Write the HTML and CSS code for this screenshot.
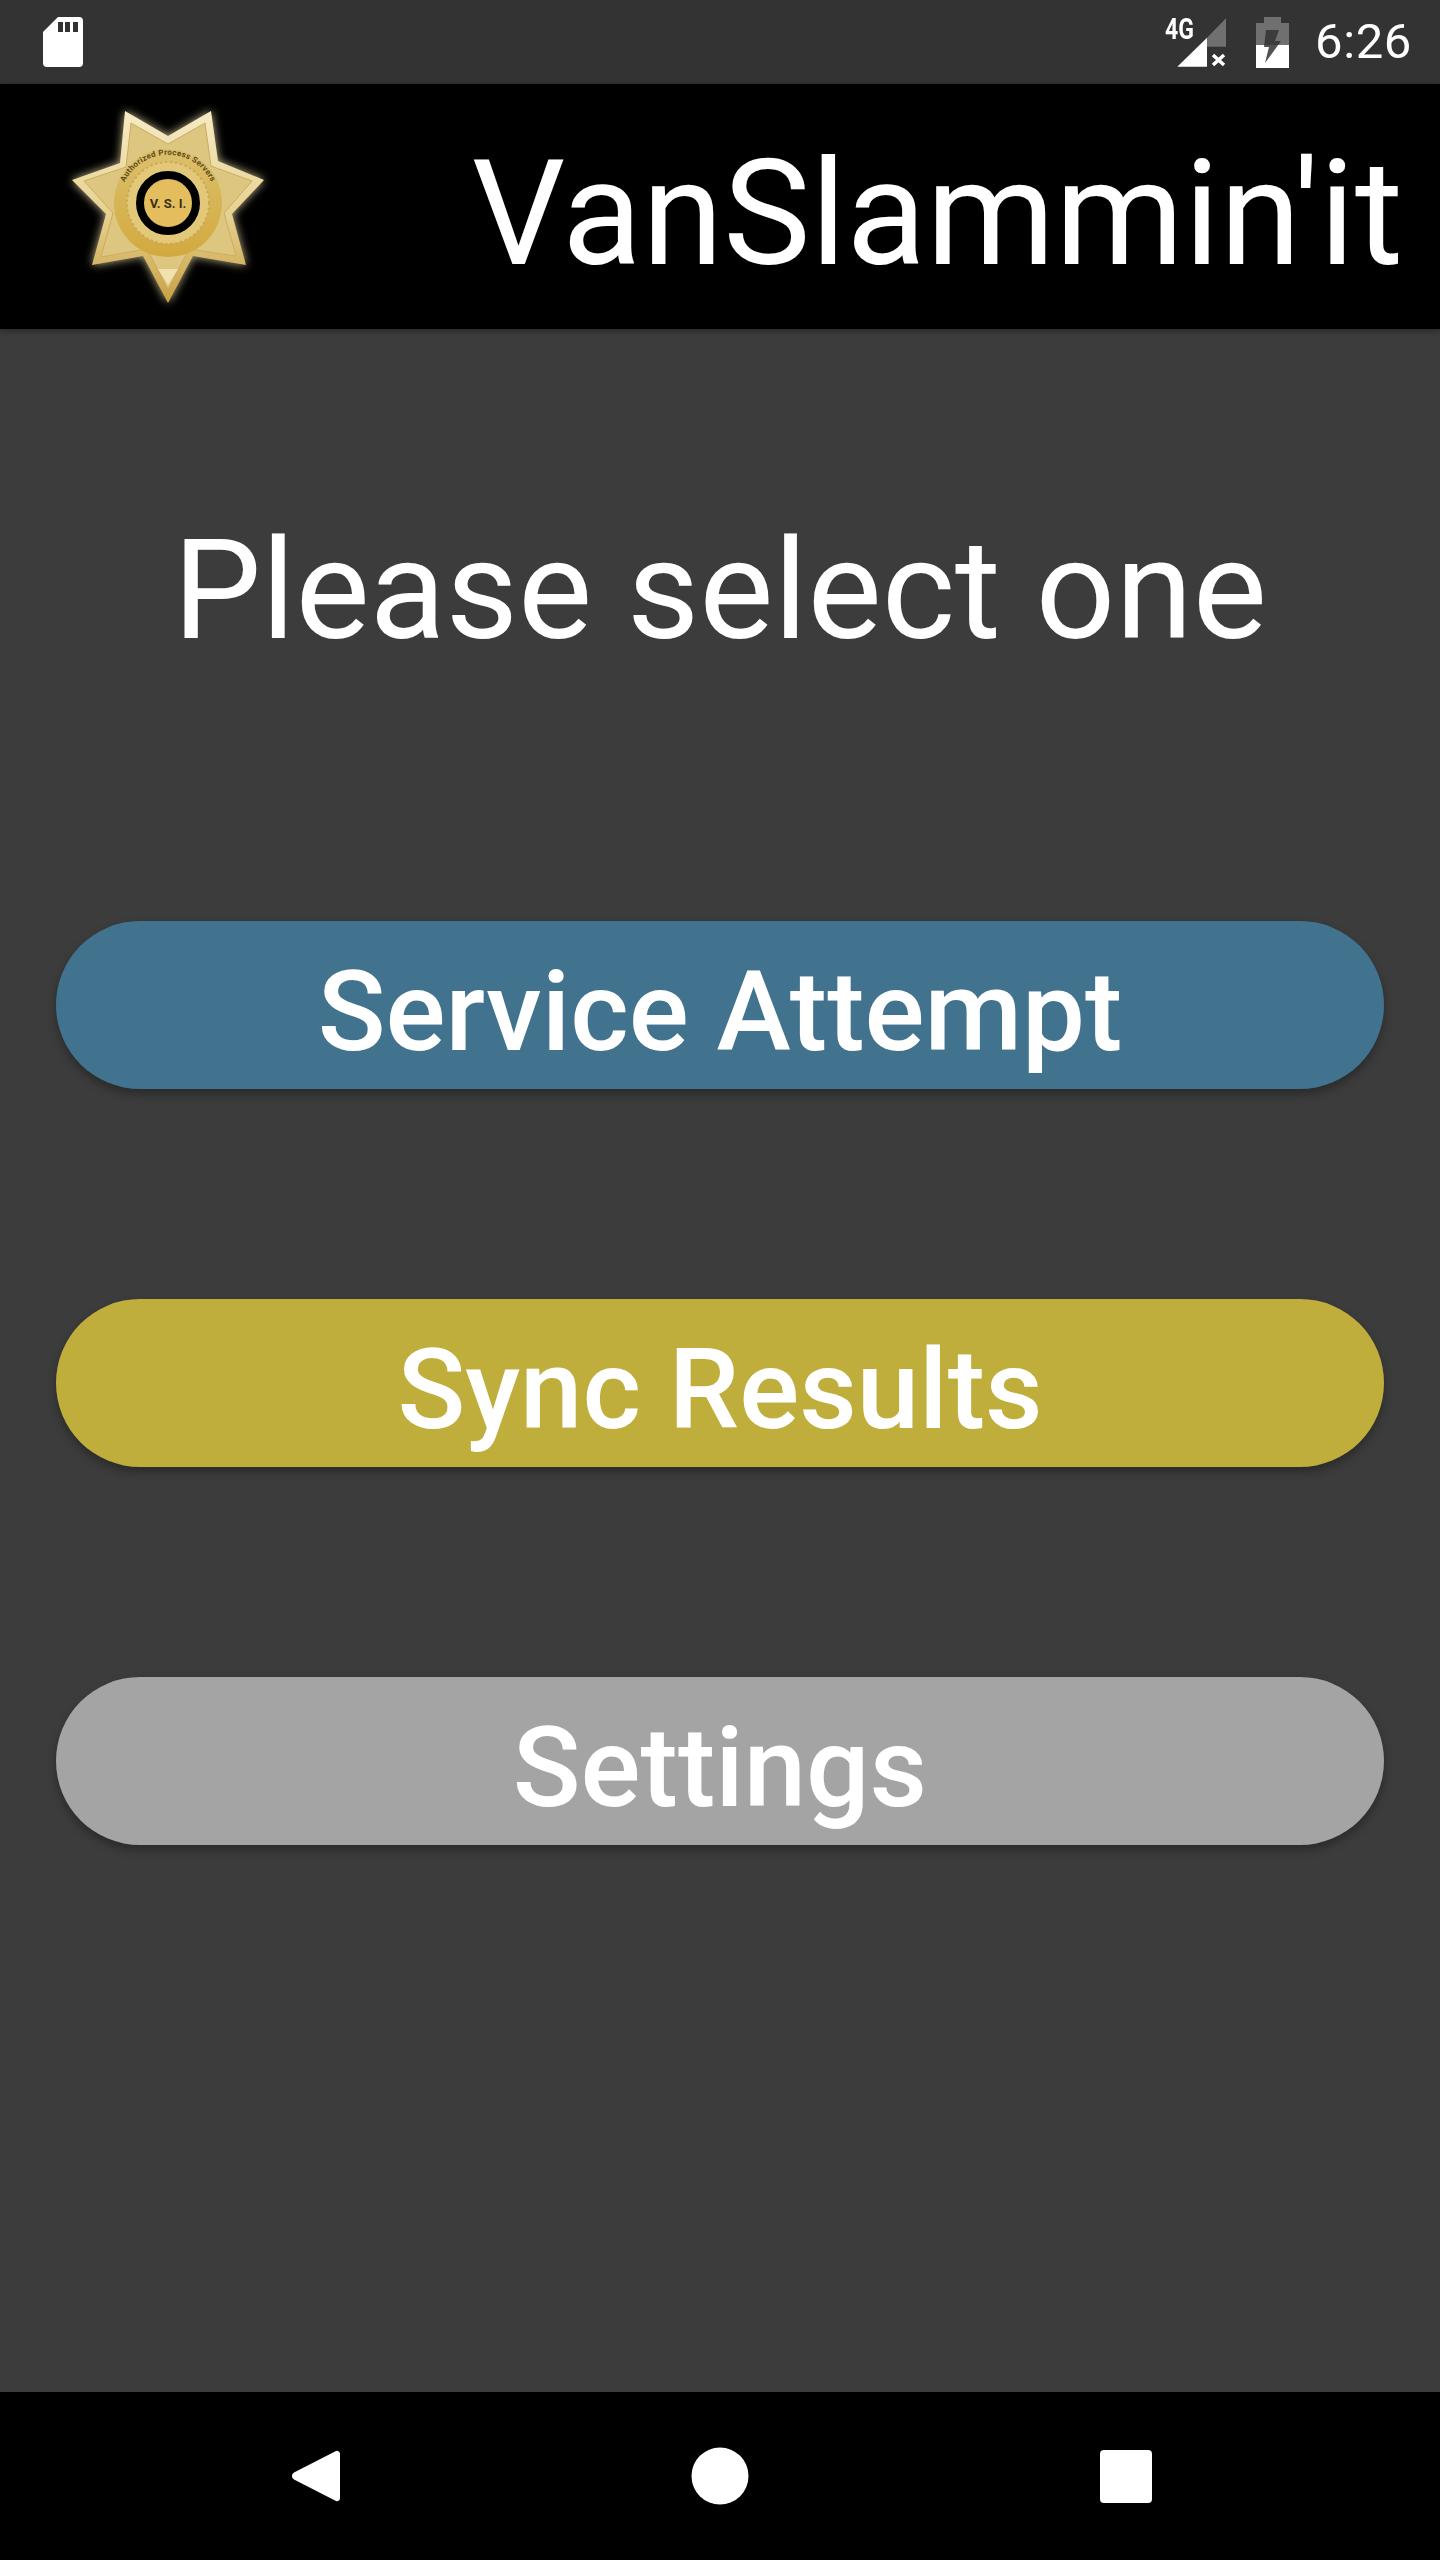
FILE: index.html
```html
<!DOCTYPE html>
<html lang="en">
<head>
<meta charset="utf-8">
<title>VanSlammin'it</title>
<link rel="stylesheet" href="styles.css">
</head>
<body>
<div class="status-bar">
  <svg class="sd-icon" width="40" height="50" viewBox="0 0 40 50"><path d="M15 0H36a4 4 0 0 1 4 4V46a4 4 0 0 1-4 4H4a4 4 0 0 1-4-4V15Z" fill="#fff"/><path d="M15 5h5v10h-5zM22 5h5v10h-5zM30 5h5v10h-5z" fill="#333"/></svg>
  <div class="status-right">
    <div class="signal">
      <svg class="signal-icon" width="62" height="50" viewBox="0 0 62 50"><path d="M31 20.700 50 1.300V29.700H31Z" fill="#fff" fill-opacity=".3"/><path d="M1.300 49.700 31 20.700V49.700Z" fill="#fff"/><path d="M37 38 48 48M48 38 37 48" stroke="#fff" stroke-width="3.600" fill="none"/></svg>
      <span class="net-label">4G</span>
    </div>
    <svg class="battery-icon" width="33" height="51" viewBox="0 0 33 51"><path d="M8 0H25V6H33V51H0V6H8Z" fill="#fff" fill-opacity=".3"/><path d="M0 28H33V51H0Z" fill="#fff"/><path d="M10 13H23L19 24H25L9 46 13 30H8Z" fill="#333" fill-opacity=".85"/></svg>
    <span class="clock">6:26</span>
  </div>
</div>
<header class="toolbar">
  <svg class="badge" width="220" height="220" viewBox="58 90 220 220">
    <defs>
      <filter id="glow" x="-20%" y="-20%" width="140%" height="140%"><feGaussianBlur stdDeviation="5"/></filter>
      <linearGradient id="gold" x1="0" y1="0" x2="0" y2="1"><stop offset="0" stop-color="#f6ebc4"/><stop offset=".55" stop-color="#e6d08e"/><stop offset="1" stop-color="#c9a043"/></linearGradient>
      <linearGradient id="ring" x1="0" y1="0" x2="0" y2="1"><stop offset="0" stop-color="#dcc06c"/><stop offset="1" stop-color="#d2a93e"/></linearGradient>
      <path id="arc" d="M120.700 193.700A48 48 0 0 1 215.300 193.700"/>
    </defs>
    <path d="M125 110 168 135 211 110 218 160 264 179 232 213 246 264 193 255 168 302 143 255 92 264 106 213 72 179 120 162Z" fill="#f3e3b0" filter="url(#glow)" opacity=".8"/>
    <path d="M125 110 168 135 211 110 218 160 264 179 232 213 246 264 193 255 168 302 143 255 92 264 106 213 72 179 120 162Z" fill="url(#gold)"/>
    <path d="M131 122 168 143 205 122 211 165 252 180 224 212 236 255 189 248 168 288 147 248 101 256 113 212 84 180 126 166Z" fill="#dcc680" stroke="#c9ae62" stroke-width="1"/>
    <path d="M158 268H178L168 284Z" fill="#efe2ae"/>
    <circle cx="168" cy="202" r="54" fill="url(#ring)"/>
    <circle cx="168" cy="202" r="41" fill="#e2c878" stroke="#c8a850" stroke-width="2" stroke-dasharray="2 3"/>
    <circle cx="168" cy="202" r="28" fill="#e3bd5e" stroke="#000" stroke-width="8"/>
    <text class="badge-motto"><textPath href="#arc" startOffset="50%" text-anchor="middle">Authorized Process Servers</textPath></text>
    <text class="badge-initials" x="168" y="206.500" text-anchor="middle">V. S. I.</text>
  </svg>
  <h1 class="app-title">VanSlammin'it</h1>
</header>
<main class="content">
  <h2 class="prompt">Please select one</h2>
  <div class="actions">
    <button class="pill pill-blue">Service Attempt</button>
    <button class="pill pill-yellow">Sync Results</button>
    <button class="pill pill-grey">Settings</button>
  </div>
</main>
<nav class="nav-bar">
  <svg width="50" height="56" viewBox="0 0 50 56"><path d="M46 3 4 24.500a4 4 0 0 0 0 7L46 53a3 3 0 0 0 4-3V6a3 3 0 0 0-4-3Z" fill="#fff"/></svg>
  <svg width="58" height="58" viewBox="0 0 58 58"><circle cx="29" cy="29" r="28.500" fill="#fff"/></svg>
  <svg width="52" height="53" viewBox="0 0 52 53"><rect width="52" height="53" rx="4" fill="#fff"/></svg>
</nav>
</body>
</html>
```
FILE: styles.css
```css
* { box-sizing: border-box; }
html, body { margin: 0; padding: 0; }
body {
  width: 1440px;
  height: 2560px;
  display: flex;
  flex-direction: column;
  background: #3c3c3c;
  color: #fff;
  font-family: Roboto, "Liberation Sans", sans-serif;
  overflow: hidden;
}
.status-bar {
  height: 84px;
  flex: none;
  background: #333;
  display: flex;
  align-items: center;
  justify-content: space-between;
  padding: 0 28px 0 43px;
}
.sd-icon { display: block; }
.status-right { display: flex; align-items: center; }
.signal { position: relative; width: 62px; height: 50px; margin-right: 18px; }
.signal-icon { display: block; }
.net-label {
  position: absolute;
  left: -11px;
  top: -2px;
  font-size: 29.500px;
  line-height: 28px;
  font-weight: 700;
  transform: scaleX(.78);
  transform-origin: left center;
}
.battery-icon { display: block; margin-right: 26px; }
.clock { font-size: 49px; line-height: 56px; font-weight: 400; letter-spacing: .6px; }
.toolbar {
  height: 245px;
  flex: none;
  background: #000;
  display: flex;
  align-items: center;
  justify-content: space-between;
  padding: 0 37px 0 58px;
  box-shadow: 0 2px 6px rgba(0,0,0,.35);
  position: relative;
}
.badge { display: block; flex: none; margin-top: -11px; }
.badge-motto { font: 700 8px Roboto, sans-serif; fill: #5c4a1c; letter-spacing: .3px; }
.badge-initials { font: 700 13px Roboto, sans-serif; fill: #3a3014; }
.app-title {
  margin: 14px 0 0;
  font-size: 147px;
  line-height: 172px;
  font-weight: 400;
  white-space: nowrap;
}
.content {
  flex: 1;
  display: flex;
  flex-direction: column;
  padding: 0 56px;
}
.prompt {
  margin: 171px 0 0;
  height: 180px;
  font-size: 140px;
  line-height: 180px;
  font-weight: 400;
  text-align: center;
  white-space: nowrap;
}
.actions {
  margin-top: 241px;
  display: flex;
  flex-direction: column;
  gap: 210px;
}
.pill {
  display: block;
  width: 100%;
  height: 168px;
  border: 0;
  border-radius: 84px;
  padding: 12px 0 0;
  color: #fff;
  font-family: Roboto, sans-serif;
  font-size: 112px;
  font-weight: 500;
  box-shadow: 0 5px 10px rgba(0,0,0,.3);
}
.pill-blue { background: #41738e; }
.pill-yellow { background: #bfae3c; }
.pill-grey { background: #a4a4a4; }
.nav-bar {
  height: 168px;
  flex: none;
  background: #000;
  display: flex;
  align-items: center;
  padding: 0 288px 0 290px;
  justify-content: space-between;
}
```
